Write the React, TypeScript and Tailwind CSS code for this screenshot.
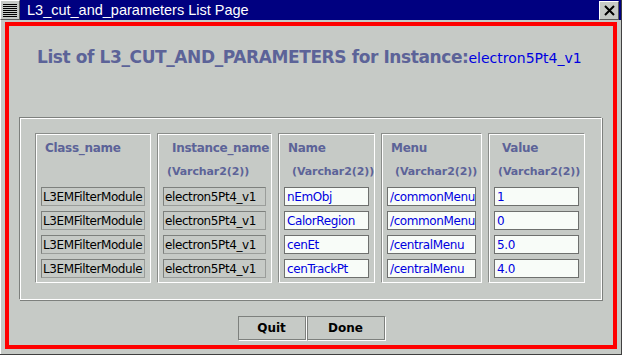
import React from "react";

const rows = [
  { cls: "L3EMFilterModule", inst: "electron5Pt4_v1", name: "nEmObj", menu: "/commonMenu", value: "1" },
  { cls: "L3EMFilterModule", inst: "electron5Pt4_v1", name: "CalorRegion", menu: "/commonMenu", value: "0" },
  { cls: "L3EMFilterModule", inst: "electron5Pt4_v1", name: "cenEt", menu: "/centralMenu", value: "5.0" },
  { cls: "L3EMFilterModule", inst: "electron5Pt4_v1", name: "cenTrackPt", menu: "/centralMenu", value: "4.0" },
];

const columns = [
  { key: "cls", title: "Class_name", sub: "", w: "w-[116px]", tPad: "pl-[4px]", sPad: "pl-[4px]", editable: false },
  { key: "inst", title: "Instance_name", sub: "(Varchar2(2))", w: "w-[115px]", tPad: "pl-[9px]", sPad: "pl-[4px]", editable: false },
  { key: "name", title: "Name", sub: "(Varchar2(2))", w: "w-[97px]", tPad: "pl-[4px]", sPad: "pl-[8px]", editable: true },
  { key: "menu", title: "Menu", sub: "(Varchar2(2))", w: "w-[101px]", tPad: "pl-[4px]", sPad: "pl-[8px]", editable: true },
  { key: "value", title: "Value", sub: "(Varchar2(2))", w: "w-[97px]", tPad: "pl-[8px]", sPad: "pl-[4px]", editable: true },
] as const;

function TitleBar() {
  return (
    <div className="h-[20px] bg-[#000080] flex items-center shrink-0">
      {/* window menu button */}
      <div className="w-[20px] h-[20px] bg-[#c6cac6] border border-t-white border-l-white border-r-[#5a5a5a] border-b-[#5a5a5a] flex flex-col justify-center gap-[1px] px-[2px]">
        {Array.from({ length: 7 }).map((_, i) => (
          <div key={i} className="h-[1px] bg-black" />
        ))}
      </div>
      <span className="ml-[7px] text-white text-[14.5px] leading-none font-['Liberation_Sans',sans-serif] whitespace-nowrap">
        L3_cut_and_parameters List Page
      </span>
      <div className="flex-1" />
      <div className="mr-[2px] w-[20px] h-[19px] bg-[#c6cac6] border border-t-white border-l-white border-r-[#5a5a5a] border-b-[#5a5a5a] flex items-center justify-center">
        <svg width="11" height="11" viewBox="0 0 11 11">
          <path d="M1 1 L10 10 M10 1 L1 10" stroke="#000" strokeWidth="2" />
        </svg>
      </div>
    </div>
  );
}

export default function App() {
  return (
    <div className="w-[622px] h-[355px] bg-[#c6cac6] flex flex-col font-['DejaVu_Sans',sans-serif] overflow-hidden border-r border-b border-r-[#404040] border-b-[#404040]">
      <TitleBar />
      <div className="flex-1 pt-[2px] pl-[4px] pr-[4px] pb-[5px] border-l border-l-white">
        <div className="h-full border-4 border-[#ff0000] flex flex-col">
          {/* Heading */}
          <div className="h-[42px] pl-[28px] pt-[20px] flex items-baseline whitespace-nowrap">
            <span className="text-[17px] tracking-[-0.4px] font-bold text-[#5c6398] leading-[22px]">
              List of L3_CUT_AND_PARAMETERS for Instance:
            </span>
            <span className="text-[14px] text-[#0000e0] leading-[22px]">electron5Pt4_v1</span>
          </div>

          {/* Table panel */}
          <div className="mt-[49px] ml-[10px] mr-[11px] h-[183px] border border-t-[#7d807d] border-l-[#7d807d] border-r-white border-b-white shadow-[inset_1px_1px_0_#fff,1px_1px_0_#7d807d] pt-[15px] pl-[15px] flex gap-[6px]">
            {columns.map((c) => (
              <div
                key={c.key}
                className={`${c.w} h-[150px] border border-t-[#8a8d8a] border-l-[#8a8d8a] border-r-white border-b-white shadow-[inset_1px_1px_0_#fff] flex flex-col px-[5px] pt-[2px]`}
              >
                <div className={`h-[24px] flex items-center text-[12px] tracking-[-0.3px] font-bold text-[#5c6398] whitespace-nowrap ${c.tPad}`}>
                  {c.title}
                </div>
                <div className={`h-[24px] flex items-center text-[11px] tracking-[-0.1px] font-bold text-[#5c6398] whitespace-nowrap ${c.sPad}`}>
                  {c.sub}
                </div>
                <div className="mt-[3px] flex flex-col gap-[5px]">
                  {rows.map((r, i) => (
                    <div
                      key={i}
                      className={
                        c.editable
                          ? "h-[19px] bg-[#f8fcf8] border border-[#6e706e] flex items-center pl-[2px] text-[12px] tracking-[-0.4px] text-[#0000e0] whitespace-nowrap overflow-hidden"
                          : "h-[19px] bg-[#c6cac6] border border-t-[#7d807d] border-l-[#7d807d] border-r-[#9a9d9a] border-b-[#9a9d9a] flex items-center pl-[1px] text-[12px] tracking-[-0.4px] text-black whitespace-nowrap overflow-hidden"
                      }
                    >
                      {r[c.key]}
                    </div>
                  ))}
                </div>
              </div>
            ))}
          </div>

          {/* Buttons */}
          <div className="mt-[16px] flex justify-center gap-[1px]">
            <button className="w-[68px] h-[24px] border border-[#7d807d] shadow-[1px_1px_0_#fff] bg-[#c6cac6] text-[12px] font-bold text-black">
              Quit
            </button>
            <button className="w-[78px] h-[24px] border border-[#7d807d] shadow-[1px_1px_0_#fff] bg-[#c6cac6] text-[12px] font-bold text-black">
              Done
            </button>
          </div>
        </div>
      </div>
    </div>
  );
}
